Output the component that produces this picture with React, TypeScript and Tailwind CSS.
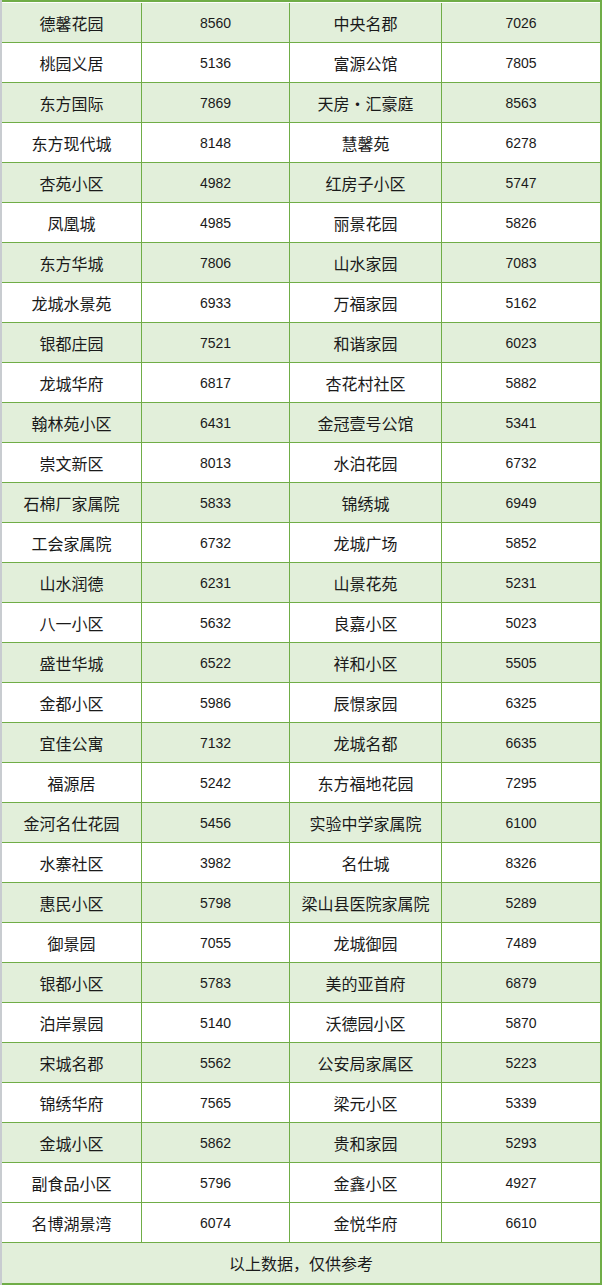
import React from "react";

const rows: [string, string, string, string][] = [
  ["德馨花园", "8560", "中央名郡", "7026"],
  ["桃园义居", "5136", "富源公馆", "7805"],
  ["东方国际", "7869", "天房·汇豪庭", "8563"],
  ["东方现代城", "8148", "慧馨苑", "6278"],
  ["杏苑小区", "4982", "红房子小区", "5747"],
  ["凤凰城", "4985", "丽景花园", "5826"],
  ["东方华城", "7806", "山水家园", "7083"],
  ["龙城水景苑", "6933", "万福家园", "5162"],
  ["银都庄园", "7521", "和谐家园", "6023"],
  ["龙城华府", "6817", "杏花村社区", "5882"],
  ["翰林苑小区", "6431", "金冠壹号公馆", "5341"],
  ["崇文新区", "8013", "水泊花园", "6732"],
  ["石棉厂家属院", "5833", "锦绣城", "6949"],
  ["工会家属院", "6732", "龙城广场", "5852"],
  ["山水润德", "6231", "山景花苑", "5231"],
  ["八一小区", "5632", "良嘉小区", "5023"],
  ["盛世华城", "6522", "祥和小区", "5505"],
  ["金都小区", "5986", "辰憬家园", "6325"],
  ["宜佳公寓", "7132", "龙城名都", "6635"],
  ["福源居", "5242", "东方福地花园", "7295"],
  ["金河名仕花园", "5456", "实验中学家属院", "6100"],
  ["水寨社区", "3982", "名仕城", "8326"],
  ["惠民小区", "5798", "梁山县医院家属院", "5289"],
  ["御景园", "7055", "龙城御园", "7489"],
  ["银都小区", "5783", "美的亚首府", "6879"],
  ["泊岸景园", "5140", "沃德园小区", "5870"],
  ["宋城名郡", "5562", "公安局家属区", "5223"],
  ["锦绣华府", "7565", "梁元小区", "5339"],
  ["金城小区", "5862", "贵和家园", "5293"],
  ["副食品小区", "5796", "金鑫小区", "4927"],
  ["名博湖景湾", "6074", "金悦华府", "6610"],
];

const cjkCell =
  "shrink-0 flex items-center justify-center text-[16px] font-['Noto_Sans_CJK_SC','Noto_Sans',sans-serif]";
const numCell =
  "shrink-0 flex items-center justify-center pt-[2px] text-[14px] font-['Liberation_Sans','DejaVu_Sans',sans-serif]";

export default function App() {
  return (
    <div className="w-[604px] h-[1285px] bg-white flex overflow-hidden">
      <div className="w-[2px] shrink-0 bg-[#c8ccd0]" />
      <div className="w-[600px] shrink-0 pt-[1px] border-t-2 border-b-2 border-r-2 border-[#70ad47] text-[#1a1a1a]">
        {rows.map((r, i) => {
          const green = i % 2 === 0 && i !== 30;
          return (
            <div
              key={i}
              className={
                green
                  ? "flex h-[40px] border-b border-[#70ad47] bg-[#e2efda]"
                  : "flex h-[40px] border-b border-[#70ad47] bg-white"
              }
            >
              <div className={`w-[140px] border-r border-[#70ad47] ${cjkCell}`}>{r[0]}</div>
              <div className={`w-[148px] border-r border-[#70ad47] ${numCell}`}>{r[1]}</div>
              <div className={`w-[152px] border-r border-[#70ad47] ${cjkCell}`}>{r[2]}</div>
              <div className={`flex-1 ${numCell}`}>{r[3]}</div>
            </div>
          );
        })}
        <div className={`h-[40px] bg-[#e2efda] ${cjkCell}`}>以上数据，仅供参考</div>
      </div>
    </div>
  );
}
